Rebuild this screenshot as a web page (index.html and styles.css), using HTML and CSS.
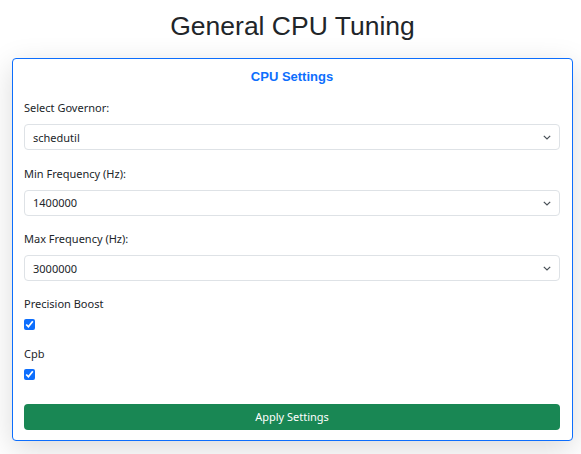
FILE: index.html
```html
<!DOCTYPE html>
<html lang="en">
<head>
    <meta charset="UTF-8">
    <meta name="viewport" content="width=device-width, initial-scale=1.0">
    <title>General CPU Tuning</title>
    <link rel="stylesheet" href="styles.css">
</head>
<body>
<div class="page">
    <h1>General CPU Tuning</h1>
    <div class="card">
        <h5 class="card-title">CPU Settings</h5>
        <form id="cpuForm">
            <div class="group">
                <label for="governor">Select Governor:</label>
                <div class="select-wrap">
                    <select id="governor">
                        <option>schedutil</option>
                        <option>performance</option>
                        <option>powersave</option>
                    </select>
                    <svg class="chevron" width="8" height="5" viewBox="0 0 8 5"><path d="M0.8 0.8l3.2 3.2 3.2-3.2" fill="none" stroke="#495057" stroke-width="1.2"/></svg>
                </div>
            </div>
            <div class="group">
                <label for="minFreq">Min Frequency (Hz):</label>
                <div class="select-wrap">
                    <select id="minFreq">
                        <option>1400000</option>
                        <option>2200000</option>
                        <option>3000000</option>
                    </select>
                    <svg class="chevron" width="8" height="5" viewBox="0 0 8 5"><path d="M0.8 0.8l3.2 3.2 3.2-3.2" fill="none" stroke="#495057" stroke-width="1.2"/></svg>
                </div>
            </div>
            <div class="group">
                <label for="maxFreq">Max Frequency (Hz):</label>
                <div class="select-wrap">
                    <select id="maxFreq">
                        <option>3000000</option>
                        <option>2200000</option>
                        <option>1400000</option>
                    </select>
                    <svg class="chevron" width="8" height="5" viewBox="0 0 8 5"><path d="M0.8 0.8l3.2 3.2 3.2-3.2" fill="none" stroke="#495057" stroke-width="1.2"/></svg>
                </div>
            </div>
            <div class="check-group">
                <label for="boost">Precision Boost</label>
                <input type="checkbox" id="boost" checked>
            </div>
            <div class="check-group">
                <label for="cpb">Cpb</label>
                <input type="checkbox" id="cpb" checked>
            </div>
            <button type="submit">Apply Settings</button>
        </form>
    </div>
</div>
<script>
    document.getElementById('cpuForm').addEventListener('submit', function(event) {
        event.preventDefault();
    });
</script>
</body>
</html>
```

FILE: styles.css
```css
body {
    margin: 0;
    padding: 0;
    background-color: #fff;
    font-family: "Noto Sans", sans-serif;
    color: #212529;
}

.page {
    padding: 10px 8px 14px 12px;
}

h1 {
    margin: 0 0 16px;
    font-family: "Liberation Sans", Arial, sans-serif;
    font-size: 26.5px;
    font-weight: 400;
    line-height: 32px;
    text-align: center;
    color: #212529;
}

.card {
    border: 1px solid #0d6efd;
    border-radius: 4px;
    padding: 10px 12px 10px 11px;
    background-color: #fff;
    box-shadow: 0 8px 30px rgba(0,0,0,0.15);
}

.card-title {
    margin: 0 0 14px;
    font-family: "Liberation Sans", Arial, sans-serif;
    font-size: 13px;
    font-weight: 700;
    line-height: 16px;
    text-align: center;
    color: #0d6efd;
}

label {
    display: block;
    font-size: 11px;
    line-height: 17px;
}

.group {
    margin-bottom: 14.5px;
}

.group:nth-of-type(3) {
    margin-bottom: 13.5px;
}

.group label {
    margin-bottom: 8px;
}

.select-wrap {
    position: relative;
}

select {
    appearance: none;
    display: block;
    width: 100%;
    height: 26px;
    padding: 0 24px 0 8px;
    border: 1px solid #dee2e6;
    border-radius: 4px;
    background-color: #fff;
    font-family: "Noto Sans", sans-serif;
    font-size: 11px;
    color: #212529;
}

.chevron {
    position: absolute;
    right: 9px;
    top: 11px;
    pointer-events: none;
}

.check-group {
    margin-bottom: 15px;
}

.check-group label {
    margin-bottom: 7px;
}

input[type="checkbox"] {
    display: block;
    width: 11px;
    height: 11px;
    margin: 0;
    accent-color: #0d6efd;
}

button {
    display: block;
    width: 100%;
    height: 26px;
    margin-top: 24px;
    border: none;
    border-radius: 4px;
    background-color: #198754;
    color: #fff;
    font-family: "Noto Sans", sans-serif;
    font-size: 11px;
    cursor: pointer;
}
```
